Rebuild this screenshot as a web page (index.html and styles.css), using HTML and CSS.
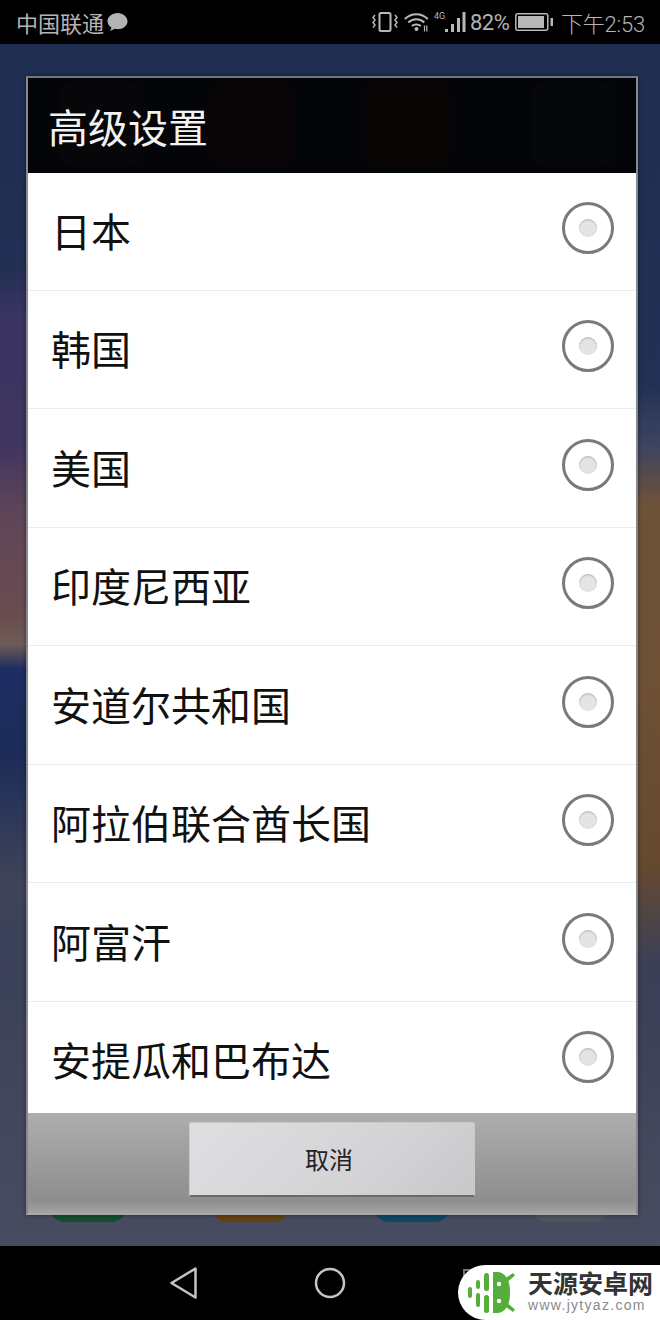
FILE: index.html
```html
<!DOCTYPE html>
<html lang="zh-CN">
<head>
    <meta charset="UTF-8">
    <title>高级设置</title>
    <link rel="stylesheet" href="styles.css">
</head>
<body>
    <div class="phone">
        <div class="statusbar">
            <div class="status-left">
                <span>中国联通</span>
                <svg class="msg-icon" width="21" height="20" viewBox="0 0 21 20">
                    <path d="M10.500 1c5.500 0 10 3.700 10 8.200s-4.500 8-10 8c-1 0-2-.1-2.900-.4-1.300 1.100-3 1.800-5 2 1-1 1.600-2 1.800-3.400C2 13.900.5 11.700.5 9.200.5 4.700 5 1 10.500 1z" fill="#b4b4b4"/>
                </svg>
            </div>
            <div class="status-right">
                <svg width="26" height="20" viewBox="0 0 26 20" fill="none" stroke="#b8b8b8">
                    <rect x="7.500" y="1" width="11" height="18" rx="1.500" stroke-width="2"/>
                    <path d="M3 3l-2 2.500 2 2.500-2 2.500 2 2.500-2 2.500M23 3l2 2.500-2 2.500 2 2.500-2 2.500 2 2.500" stroke-width="1.500"/>
                </svg>
                <svg class="wifi" width="25" height="20" viewBox="0 0 25 20" fill="none" stroke="#b8b8b8" stroke-width="2">
                    <path d="M.8 7c6.400-6.500 16.600-6.500 23 0M4.300 10.500c4.400-4.300 11.600-4.300 16 0M7.800 14c2.400-2 6.600-2 9 0"/>
                    <circle cx="12.500" cy="17" r="2" fill="#b8b8b8" stroke="none"/>
                    <path d="M20.500 13.500v6M22.800 13.500v6" stroke-width="1.200"/>
                </svg>
                <span class="net">4G</span>
                <svg class="signal" width="21" height="20" viewBox="0 0 21 20" fill="#b8b8b8">
                    <rect x="0" y="17" width="3" height="3"/>
                    <rect x="6" y="12" width="3" height="8"/>
                    <rect x="12" y="6" width="3" height="14"/>
                    <rect x="17.500" y="0" width="3" height="20"/>
                </svg>
                <span class="pct">82%</span>
                <svg class="battery" width="38" height="18" viewBox="0 0 38 18">
                    <rect x=".8" y=".8" width="32" height="16.400" rx="2" fill="none" stroke="#b8b8b8" stroke-width="1.500"/>
                    <rect x="3" y="3" width="26" height="12" fill="#b8b8b8"/>
                    <rect x="35.500" y="5" width="2.500" height="8" fill="#b8b8b8"/>
                </svg>
                <span class="clock">下午2:53</span>
            </div>
        </div>

        <div class="wallpaper">
            <div class="dock">
                <i class="dock-green"></i>
                <i class="dock-orange"></i>
                <i class="dock-blue"></i>
                <i class="dock-gray"></i>
            </div>
            <div class="dialog">
                <div class="dialog-title">
                    <i class="ghost ghost-a"></i>
                    <i class="ghost ghost-b"></i>
                    <i class="ghost ghost-c"></i>
                    <i class="ghost ghost-d"></i>
                    <span>高级设置</span>
                </div>
                <div class="list">
                    <div class="row"><span>日本</span><i class="radio"></i></div>
                    <div class="row"><span>韩国</span><i class="radio"></i></div>
                    <div class="row"><span>美国</span><i class="radio"></i></div>
                    <div class="row"><span>印度尼西亚</span><i class="radio"></i></div>
                    <div class="row"><span>安道尔共和国</span><i class="radio"></i></div>
                    <div class="row"><span>阿拉伯联合酋长国</span><i class="radio"></i></div>
                    <div class="row"><span>阿富汗</span><i class="radio"></i></div>
                    <div class="row"><span>安提瓜和巴布达</span><i class="radio"></i></div>
                </div>
                <div class="dialog-footer">
                    <button class="cancel">取消</button>
                </div>
            </div>
        </div>

        <div class="navbar">
            <svg width="30" height="34" viewBox="0 0 30 34" fill="none" stroke="#c4c4c4" stroke-width="2.500" stroke-linejoin="round">
                <path d="M26.500 2.500v29L2.500 17z"/>
            </svg>
            <svg width="32" height="32" viewBox="0 0 32 32" fill="none" stroke="#c4c4c4" stroke-width="2.500">
                <circle cx="16" cy="16" r="14"/>
            </svg>
            <i class="recent"></i>
            <div class="watermark">
                <svg width="51" height="41" viewBox="0 0 51 41">
                    <g fill="#55ad3a">
                        <rect x="0" y="15" width="4" height="11" rx="2"/>
                        <rect x="8" y="8" width="4" height="9" rx="2"/>
                        <rect x="8" y="21" width="4" height="14" rx="2"/>
                        <rect x="16" y="1" width="5" height="18" rx="2.500"/>
                        <rect x="16" y="23" width="5" height="18" rx="2.500"/>
                        <path d="M25 0h4c4 0 7.500 2 9.500 5.500L45 1l2 2.500-6.500 5.500c1 3.500 1.500 7 1.500 11.500s-.5 8-1.500 11.500L47 37.500 45 40l-6.500-4.500C36.500 39 33 41 29 41h-4z"/>
                    </g>
                    <circle cx="31" cy="12" r="2.200" fill="#fff"/>
                    <circle cx="31" cy="29" r="2.200" fill="#fff"/>
                </svg>
                <div class="wm-text">
                    <div class="wm-name">天源安卓网</div>
                    <div class="wm-url">www.jytyaz.com</div>
                </div>
            </div>
        </div>
    </div>
</body>
</html>
```

FILE: styles.css
```css
* {
    box-sizing: border-box;
}

body {
    margin: 0;
    font-family: "Liberation Sans", "Noto Sans CJK SC", sans-serif;
    background-color: #000;
}

.phone {
    width: 660px;
    height: 1320px;
    display: flex;
    flex-direction: column;
    overflow: hidden;
}

.statusbar {
    height: 44px;
    flex: none;
    padding: 0 15px 0 16px;
    display: flex;
    justify-content: space-between;
    align-items: center;
    background-color: #000;
    color: #b4b4b4;
    font-size: 22px;
}

.status-left,
.status-right {
    display: flex;
    align-items: center;
}

.msg-icon {
    margin-left: 3px;
}

.wifi {
    margin-left: 6px;
}

.net {
    width: 11px;
    margin: -13px 0 0 5px;
    font-family: Roboto, sans-serif;
    font-size: 9px;
    white-space: nowrap;
}

.pct {
    width: 39px;
    margin-left: 4px;
    font-family: Roboto, sans-serif;
    letter-spacing: -0.5px;
    white-space: nowrap;
}

.battery {
    margin-left: 6px;
}

.clock {
    margin-left: 8px;
    font-family: Roboto, "Noto Sans CJK SC", sans-serif;
    font-weight: 300;
    letter-spacing: -0.2px;
}

.wallpaper {
    flex: 1;
    position: relative;
    padding: 32px 22px 31px 26px;
    background:
        linear-gradient(180deg, rgba(33, 46, 80, 0) 0, rgba(33, 46, 80, 0) 220px, #3a3460 270px, #3f3560 400px, #5f4558 470px, #6a4c50 570px, #6d5c55 600px, #1e2d62 625px, #1c2b58 710px, #3f4458 840px, rgba(71, 76, 96, 0) 950px) left / 26px 100% no-repeat,
        linear-gradient(180deg, rgba(33, 46, 80, 0) 0, rgba(33, 46, 80, 0) 340px, #3d4360 400px, #6d5238 460px, #6e5034 640px, #66492f 820px, #3b4058 920px, rgba(60, 65, 88, 0) 1100px) right / 22px 100% no-repeat,
        linear-gradient(180deg, #1f2d50 0, #223156 380px, #2a3658 700px, #3f4459 1000px, #474c60 100%);
}

.dock i {
    position: absolute;
    top: 1160px;
    width: 78px;
    height: 18px;
    border-radius: 0 0 16px 16px;
}

.dock-green {
    left: 49px;
    background-color: #124f2e;
}

.dock-orange {
    left: 211px;
    background-color: #64410e;
}

.dock-blue {
    left: 373px;
    background-color: #0e4862;
}

.dock-gray {
    left: 531px;
    background-color: #50525c;
}

.dialog {
    position: relative;
    height: 1139px;
    display: flex;
    flex-direction: column;
    border: 2px solid #85888d;
    border-top-color: #74767b;
    border-bottom-color: #a8a8a8;
    box-shadow: 0 0 4px rgba(0, 0, 0, 0.45);
}

.dialog-title {
    height: 95px;
    flex: none;
    position: relative;
    padding: 0 0 0 20px;
    display: flex;
    align-items: center;
    background-color: #040509;
    color: #f2f2f2;
    font-size: 40px;
}

.dialog-title span {
    position: relative;
}

/* the app icons behind the dim title bar */
.ghost {
    position: absolute;
    top: 4px;
    width: 86px;
    height: 84px;
    border-radius: 14px;
}

.ghost-a {
    left: 30px;
    background-color: #070608;
}

.ghost-b {
    left: 182px;
    background-color: #090406;
}

.ghost-c {
    left: 336px;
    background-color: #090505;
}

.ghost-d {
    left: 502px;
    background-color: #060709;
}

.list {
    flex: 1;
    overflow: hidden;
    background-color: #fff;
}

.row {
    height: 118.500px;
    padding: 0 22px 6px 23px;
    display: flex;
    justify-content: space-between;
    align-items: center;
    border-bottom: 1px solid #ececec;
    color: #111;
    font-size: 40px;
}

.row:first-child {
    height: 117.500px;
}

.row span {
    margin-top: 4px;
}

.radio {
    width: 52px;
    height: 52px;
    border: 3px solid #7a7a7a;
    border-radius: 50%;
    display: flex;
    align-items: center;
    justify-content: center;
}

.radio::after {
    content: "";
    width: 18px;
    height: 18px;
    border-radius: 50%;
    background-color: #e4e4e4;
    box-shadow: inset 0 1px 2px #b4b4b4;
}

.dialog-footer {
    height: 100px;
    flex: none;
    padding-top: 9px;
    display: flex;
    justify-content: center;
    align-items: flex-start;
    background: linear-gradient(180deg, #aeaeae 0%, #8f8d8f 88%, #a4a4a4 100%);
}

.cancel {
    width: 286px;
    height: 75px;
    margin-right: 1px;
    padding: 0 5px 2px 0;
    border: 1px solid #c9c9c9;
    border-bottom: 2px solid #6a6a6a;
    border-radius: 2px;
    background: linear-gradient(135deg, #dfdfe1 0%, #d4d3d6 60%, #c8c7ca 100%);
    color: #222;
    font-family: inherit;
    font-size: 24px;
}

.navbar {
    height: 74px;
    flex: none;
    position: relative;
    background-color: #000;
    display: flex;
    align-items: center;
    padding: 0 0 0 169px;
    gap: 115px;
}

/* recents button, almost all of it hidden by the watermark */
.recent {
    position: absolute;
    left: 463px;
    top: 23px;
    width: 30px;
    height: 30px;
    border: 2px solid #777;
}

.watermark {
    position: absolute;
    left: 458px;
    top: 19px;
    width: 202px;
    height: 55px;
    padding: 0 0 0 10px;
    display: flex;
    align-items: center;
    gap: 9px;
    background-color: #fff;
    border-radius: 28px 0 0 28px;
}

.wm-name {
    font-size: 25px;
    line-height: 25px;
    color: #333;
    font-weight: bold;
    white-space: nowrap;
}

.wm-url {
    margin-top: 1px;
    font-size: 14px;
    line-height: 15px;
    color: #8a8a8a;
    letter-spacing: 1.300px;
    white-space: nowrap;
}
```
